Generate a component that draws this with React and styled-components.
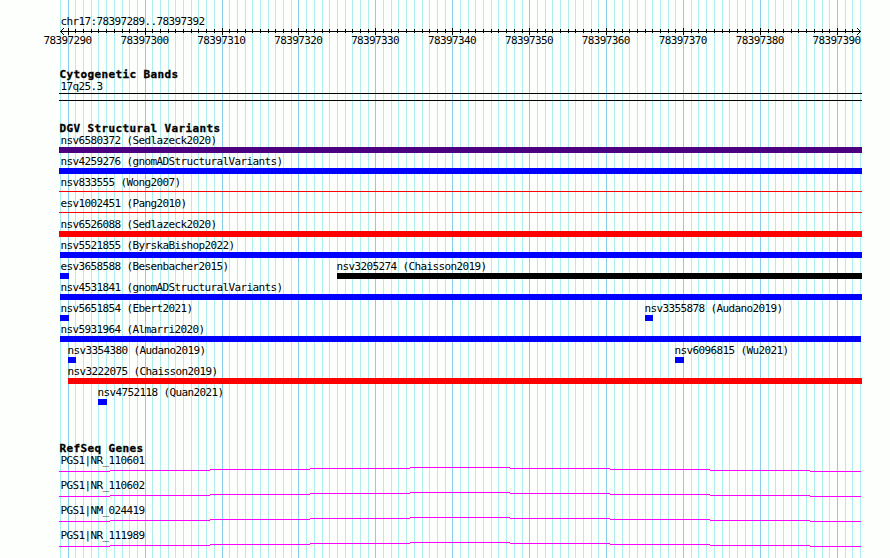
import React from 'react'
import styled, { createGlobalStyle } from 'styled-components'

const GlobalStyle = createGlobalStyle`
  body {
    margin: 0;
    background: #fdfffc;
    overflow: hidden;
  }
`

const LEFT = 60
const BASES = 104
const WIDTH = 800

const baseX = n => Math.round(LEFT + (n * WIDTH) / BASES)

const Browser = styled.main`
  position: relative;
  width: 890px;
  height: 558px;
  overflow: hidden;
  box-sizing: border-box;
  padding-top: 15px;
  background: #fdfffc;
  color: #000;
  font-family: 'DejaVu Sans Mono', monospace;
  font-size: 11px;
  line-height: 13px;
`

const GridLines = styled.svg`
  position: absolute;
  top: 0;
  left: 0;
`

const Panel = styled.section`
  position: relative;
  margin-bottom: ${props => props.$gap || 0}px;
`

const Heading = styled.h2`
  margin: 0 0 0 59px;
  height: 12px;
  font-size: 11px;
  font-weight: bold;
  line-height: 13px;
  letter-spacing: 0.377px;
  text-indent: 0.4px;
  white-space: nowrap;
  -webkit-text-stroke: 0.3px #000;
`

const Label = styled.div`
  height: 13px;
  margin-left: ${props => props.$indent || 0}px;
  letter-spacing: -0.623px;
  text-indent: 0.5px;
  white-space: nowrap;
`

const RulerDrawing = styled.svg`
  display: block;
`

const RulerLabels = styled.div`
  display: flex;
  margin-top: -1px;
  padding-left: 43px;
`

const RulerLabel = styled(Label)`
  flex: 0 0 76.92px;
`

const Band = styled.div`
  box-sizing: border-box;
  width: 803px;
  height: 8px;
  margin-left: 59px;
  border-top: 1px solid #000;
  border-bottom: 1px solid #000;
`

const VariantRow = styled.div`
  display: grid;
  height: 21px;
`

const Variant = styled.div`
  grid-area: 1 / 1;
  margin-left: ${props => props.$start}px;
`

const Bar = styled.div`
  width: ${props => props.$width}px;
  height: ${props => (props.$thin ? 1 : 6)}px;
  margin-top: ${props => (props.$thin ? 2 : 0)}px;
  background: ${props => props.$color};
`

const GeneRow = styled.div`
  height: 25px;
`

const GeneLine = styled.svg`
  display: block;
`

const BLUE = '#0000ff'
const RED = '#ff0000'

const rows = [
  [{ name: 'nsv6580372 (Sedlazeck2020)', start: 59, end: 862, color: '#4b0082' }],
  [{ name: 'nsv4259276 (gnomADStructuralVariants)', start: 59, end: 862, color: BLUE }],
  [{ name: 'nsv833555 (Wong2007)', start: 59, end: 862, color: RED, thin: true }],
  [{ name: 'esv1002451 (Pang2010)', start: 59, end: 862, color: RED, thin: true }],
  [{ name: 'nsv6526088 (Sedlazeck2020)', start: 59, end: 862, color: RED }],
  [{ name: 'nsv5521855 (ByrskaBishop2022)', start: 60, end: 862, color: BLUE }],
  [
    { name: 'esv3658588 (Besenbacher2015)', start: 60, end: 69, color: BLUE },
    { name: 'nsv3205274 (Chaisson2019)', start: 337, end: 862, color: '#000' }
  ],
  [{ name: 'nsv4531841 (gnomADStructuralVariants)', start: 60, end: 862, color: BLUE }],
  [
    { name: 'nsv5651854 (Ebert2021)', start: 60, end: 69, color: BLUE },
    { name: 'nsv3355878 (Audano2019)', start: 645, end: 653, color: BLUE }
  ],
  [{ name: 'nsv5931964 (Almarri2020)', start: 60, end: 861, color: BLUE }],
  [
    { name: 'nsv3354380 (Audano2019)', start: 68, end: 76, color: BLUE },
    { name: 'nsv6096815 (Wu2021)', start: 675, end: 684, color: BLUE }
  ],
  [{ name: 'nsv3222075 (Chaisson2019)', start: 68, end: 862, color: RED }],
  [{ name: 'nsv4752118 (Quan2021)', start: 98, end: 107, color: BLUE }]
]

const genes = ['PGS1|NR_110601', 'PGS1|NR_110602', 'PGS1|NM_024419', 'PGS1|NR_111989']

// intron line, stepped one pixel at a time up to the middle and back down
const intron = [
  [59, 110, 4],
  [110, 210, 3],
  [210, 310, 2],
  [310, 410, 1],
  [410, 510, 0],
  [510, 610, 1],
  [610, 710, 2],
  [710, 810, 3],
  [810, 861, 4]
]

const bases = Array.from({ length: BASES + 1 }, (_, n) => n)
const isMajor = n => n % 10 === 1

const Grid = () =>
  <GridLines width="890" height="558" shapeRendering="crispEdges">
    {bases.map(n =>
      <rect key={n} x={baseX(n)} y="0" width="1" height="558" fill={isMajor(n) ? '#87ceeb' : '#afeeee'} />
    )}
  </GridLines>

const Ruler = () =>
  <Panel $gap={21}>
    <Label $indent={60}>chr17:78397289..78397392</Label>
    <RulerDrawing width="890" height="7" shapeRendering="crispEdges">
      <rect x="60" y="3" width="801" height="1" />
      {bases.slice(1, -1).map(n =>
        <rect key={n} x={baseX(n)} y={isMajor(n) ? 0 : 1} width="1" height={isMajor(n) ? 7 : 4} />
      )}
      {[1, 2, 3].map(d =>
        <g key={d}>
          <rect x={60 + d} y={3 - d} width="1" height="1" />
          <rect x={60 + d} y={3 + d} width="1" height="1" />
          <rect x={860 - d} y={3 - d} width="1" height="1" />
          <rect x={860 - d} y={3 + d} width="1" height="1" />
        </g>
      )}
    </RulerDrawing>
    <RulerLabels>
      {Array.from({ length: 11 }, (_, i) =>
        <RulerLabel key={i}>{78397290 + i * 10}</RulerLabel>
      )}
    </RulerLabels>
  </Panel>

const Feature = ({ name, start, end, color, thin }) =>
  <Variant $start={start}>
    <Label $indent={start === 59 ? 1 : start === 60 ? 0 : -1}>{name}</Label>
    <Bar $width={end - start} $color={color} $thin={thin} />
  </Variant>

const Gene = ({ name }) =>
  <GeneRow>
    <Label $indent={60}>{name}</Label>
    <GeneLine width="890" height="5" shapeRendering="crispEdges">
      {intron.map(([from, to, y]) =>
        <rect key={from} x={from} y={y} width={to - from} height="1" fill="#ff00ff" />
      )}
    </GeneLine>
  </GeneRow>

const App = () =>
  <Browser>
    <GlobalStyle />
    <Grid />
    <Ruler />
    <Panel $gap={21}>
      <Heading>Cytogenetic Bands</Heading>
      <Label $indent={60}>17q25.3</Label>
      <Band />
    </Panel>
    <Panel $gap={35}>
      <Heading>DGV Structural Variants</Heading>
      {rows.map(row =>
        <VariantRow key={row[0].name}>
          {row.map(feature => <Feature key={feature.name} {...feature} />)}
        </VariantRow>
      )}
    </Panel>
    <Panel>
      <Heading>RefSeq Genes</Heading>
      {genes.map(name => <Gene key={name} name={name} />)}
    </Panel>
  </Browser>

export default App
